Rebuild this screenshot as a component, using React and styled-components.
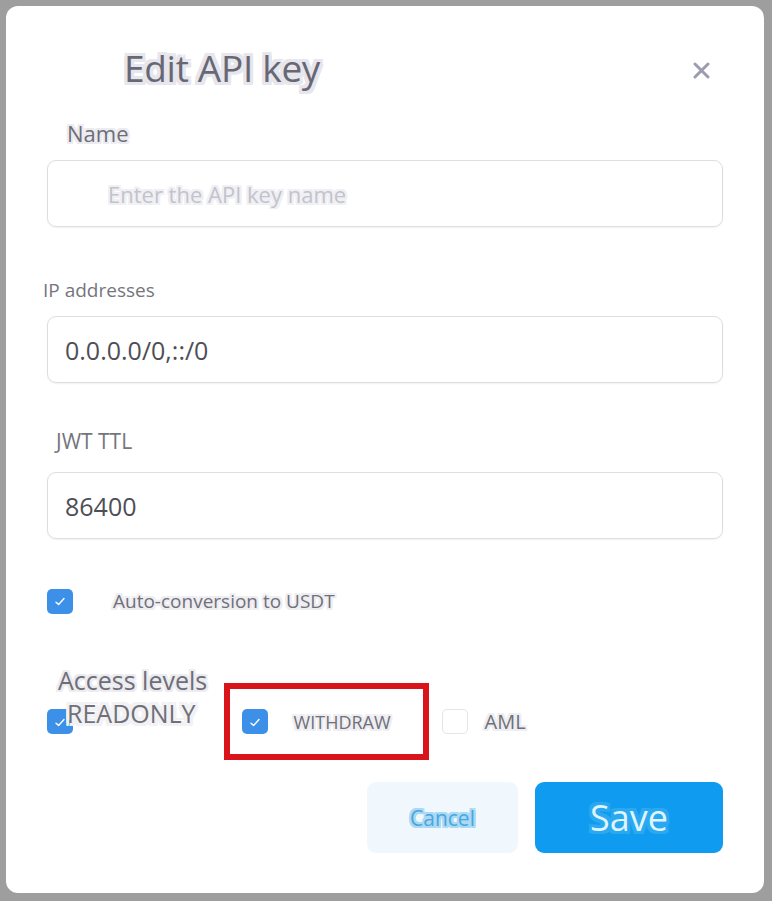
import React from "react";
import styled, { createGlobalStyle } from "styled-components";

const Global = createGlobalStyle`
  html, body { margin: 0; padding: 0; }
  body {
    background: #9e9e9e;
    font-family: "Open Sans", "Noto Sans", sans-serif;
    width: 772px;
    height: 901px;
    overflow: hidden;
  }
  * { box-sizing: border-box; }
`;

const halo = (c, r) => `
  text-shadow: ${r}px 0 ${c}, -${r}px 0 ${c}, 0 ${r}px ${c}, 0 -${r}px ${c},
    ${r}px ${r}px ${c}, -${r}px -${r}px ${c}, ${r}px -${r}px ${c}, -${r}px ${r}px ${c},
    ${r}px ${r / 2}px ${c}, -${r}px ${r / 2}px ${c}, ${r / 2}px ${r}px ${c}, -${r / 2}px -${r}px ${c};
`;

const Modal = styled.div`
  margin: 6px 0 0 6px;
  width: 758px;
  height: 887px;
  background: #ffffff;
  border-radius: 12px;
  display: flex;
  flex-direction: column;
`;

const Header = styled.div`
  display: flex;
  align-items: center;
  justify-content: space-between;
  margin-top: 40px;
  padding: 0 52px 0 118px;
`;

const Title = styled.h2`
  margin: 0;
  font-size: 37px;
  line-height: 44px;
  font-weight: 400;
  color: #686874;
  letter-spacing: -0.3px;
  ${halo("#e6e6ec", 3)}
`;

const CloseBtn = styled.button`
  border: none;
  background: none;
  padding: 0;
  margin-top: 4px;
  width: 22px;
  height: 22px;
  display: flex;
  align-items: center;
  justify-content: center;
  cursor: pointer;
`;

const Label = styled.label`
  display: block;
  margin: ${(p) => p.$top}px 0 0 ${(p) => p.$left}px;
  font-size: ${(p) => p.$size}px;
  line-height: ${(p) => p.$lh}px;
  color: ${(p) => p.$color || "#6e6e78"};
  ${(p) => (p.$halo ? halo("#ececf0", 2) : "")}
`;

const InputBox = styled.div`
  margin: ${(p) => p.$top}px 0 0 41px;
  width: 676px;
  height: 67px;
  border: 1.5px solid #dedee2;
  border-radius: 9px;
  box-shadow: 0 1px 2px rgba(0, 0, 0, 0.06);
  display: flex;
  align-items: center;
  padding-left: ${(p) => p.$pad}px;
`;

const Field = styled.input`
  border: none;
  outline: none;
  background: transparent;
  width: 100%;
  font-family: "Open Sans", "Noto Sans", sans-serif;
  font-size: ${(p) => p.$size || 25}px;
  color: #4e4e56;
  padding: 0;
  &::placeholder {
    color: #c3c3cc;
    ${halo("#f0f0f4", 2)}
  }
`;

const Row = styled.div`
  display: flex;
  align-items: center;
  margin: ${(p) => p.$top}px 0 0 41px;
`;

const Box = styled.span`
  flex: none;
  width: 26px;
  height: 25px;
  border-radius: 5px;
  display: flex;
  align-items: center;
  justify-content: center;
  background: ${(p) => (p.$checked ? "#3d90e8" : "#ffffff")};
  border: ${(p) => (p.$checked ? "none" : "1.5px solid #e4e4e8")};
`;

const CheckText = styled.span`
  margin-left: ${(p) => p.$gap}px;
  font-size: ${(p) => p.$size}px;
  line-height: 30px;
  color: #707078;
  ${(p) => (p.$halo ? halo("#eeeef2", 2) : "")}
`;

const ReadOnly = styled.span`
  position: relative;
  align-self: flex-start;
  margin: 15px 0 0 -6px;
  font-size: 25px;
  line-height: 30px;
  color: #707078;
  ${halo("#f2f2f4", 3)}
`;

const Highlight = styled.div`
  display: flex;
  align-items: center;
  margin-left: 28px;
  width: 205px;
  height: 77px;
  border: 6px solid #d9141b;
  padding-left: 12px;
`;

const AccessRow = styled.div`
  display: flex;
  align-items: center;
  margin: -12px 0 0 41px;
  height: 77px;
`;

const Plain = styled.div`
  display: flex;
  align-items: center;
  margin-left: 13px;
`;

const Footer = styled.div`
  display: flex;
  justify-content: flex-end;
  gap: 17px;
  margin: 22px 41px 0 0;
`;

const Button = styled.button`
  height: 71px;
  width: ${(p) => p.$w}px;
  border: none;
  border-radius: 9px;
  font-family: "Open Sans", "Noto Sans", sans-serif;
  cursor: pointer;
  background: ${(p) => (p.$primary ? "#0f9cf0" : "#f1f8fd")};
  color: ${(p) => (p.$primary ? "#dff4ff" : "#4aa6de")};
  font-size: ${(p) => (p.$primary ? 36 : 21)}px;
  ${(p) => (p.$primary ? halo("#2aa8f0", 3) : halo("#aad9f4", 2))}
`;

const Check = () => (
  <svg width="12" height="10" viewBox="0 0 12 10">
    <path d="M2 6.2 L4.6 8.4 L10 2.6" fill="none" stroke="#ffffff" strokeWidth="1.4" strokeLinecap="round" strokeLinejoin="round" />
  </svg>
);

const Checkbox = ({ checked }) => <Box $checked={checked}>{checked && <Check />}</Box>;

export default function App() {
  return (
    <>
      <Global />
      <Modal>
        <Header>
          <Title>Edit API key</Title>
          <CloseBtn aria-label="Close">
            <svg width="17" height="17" viewBox="0 0 17 17">
              <path d="M2 2 L15 15 M15 2 L2 15" stroke="#9c9cb0" strokeWidth="3" strokeLinecap="round" />
            </svg>
          </CloseBtn>
        </Header>

        <Label $top={28} $left={61} $size={22} $lh={30} $halo>Name</Label>
        <InputBox $top={12} $pad={60}>
          <Field placeholder="Enter the API key name" $size={22} />
        </InputBox>

        <Label $top={50} $left={37} $size={19} $lh={26} $color="#75757d">IP addresses</Label>
        <InputBox $top={13} $pad={17}>
          <Field defaultValue="0.0.0.0/0,::/0" />
        </InputBox>

        <Label $top={45} $left={50} $size={21} $lh={26} $color="#75757d">JWT TTL</Label>
        <InputBox $top={18} $pad={17}>
          <Field defaultValue="86400" />
        </InputBox>

        <Row $top={47}>
          <Checkbox checked />
          <CheckText $gap={40} $size={19} $halo>Auto-conversion to USDT</CheckText>
        </Row>

        <Label $top={49} $left={52} $size={25} $lh={30} $halo>Access levels</Label>
        <AccessRow>
          <Checkbox checked />
          <ReadOnly>READONLY</ReadOnly>
          <Highlight>
            <Checkbox checked />
            <CheckText $gap={26} $size={18} $halo>WITHDRAW</CheckText>
          </Highlight>
          <Plain>
            <Checkbox />
            <CheckText $gap={17} $size={20} $halo>AML</CheckText>
          </Plain>
        </AccessRow>

        <Footer>
          <Button $w={151}>Cancel</Button>
          <Button $w={188} $primary>Save</Button>
        </Footer>
      </Modal>
    </>
  );
}
